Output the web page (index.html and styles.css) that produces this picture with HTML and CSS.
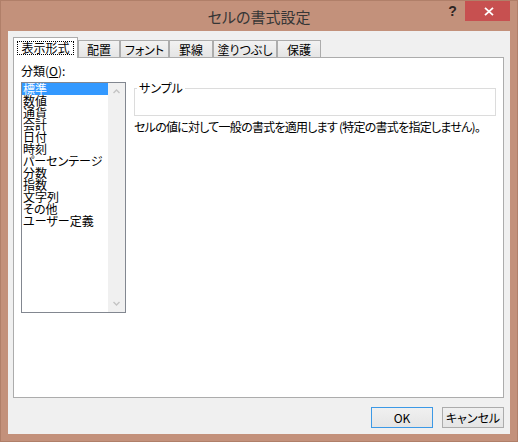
FILE: index.html
```html
<!DOCTYPE html>
<html lang="ja">
<head>
<meta charset="utf-8">
<title>セルの書式設定</title>
<link rel="stylesheet" href="styles.css">
</head>
<body>
<div class="window">
  <div class="titlebar">
    <div class="spacer"></div>
    <div class="title">セルの書式設定</div>
    <div class="controls">
      <span class="help">?</span>
      <span class="close"><svg width="10" height="9" viewBox="0 0 10 9"><path d="M1 0.8 L9 8.2 M9 0.8 L1 8.2" stroke="#fff" stroke-width="1.8" fill="none"/></svg></span>
    </div>
  </div>
  <div class="client">
    <div class="tabs">
      <div class="tab selected w65"><span class="focus">表示形式</span></div>
      <div class="tab w42">配置</div>
      <div class="tab w49">フォント</div>
      <div class="tab w44">罫線</div>
      <div class="tab w64">塗りつぶし</div>
      <div class="tab w44">保護</div>
    </div>
    <div class="panel">
      <div class="left">
        <div class="label">分類(<u>O</u>):</div>
        <div class="listbox">
          <ul class="items">
            <li class="item selected">標準</li>
            <li class="item">数値</li>
            <li class="item">通貨</li>
            <li class="item">会計</li>
            <li class="item">日付</li>
            <li class="item">時刻</li>
            <li class="item">パーセンテージ</li>
            <li class="item">分数</li>
            <li class="item">指数</li>
            <li class="item">文字列</li>
            <li class="item">その他</li>
            <li class="item">ユーザー定義</li>
          </ul>
          <div class="scrollbar">
            <span class="arrow"><svg width="7" height="5" viewBox="0 0 7 5"><path d="M0.5 4 L3.5 1 L6.5 4" stroke="#c4c4c4" stroke-width="1.4" fill="none"/></svg></span>
            <span class="arrow"><svg width="7" height="5" viewBox="0 0 7 5"><path d="M0.5 1 L3.5 4 L6.5 1" stroke="#c4c4c4" stroke-width="1.4" fill="none"/></svg></span>
          </div>
        </div>
      </div>
      <div class="right">
        <fieldset class="sample"><legend>サンプル</legend></fieldset>
        <p class="desc">セルの値に対して一般の書式を適用します (特定の書式を指定しません)。</p>
      </div>
    </div>
    <div class="buttons">
      <button class="btn default">OK</button>
      <button class="btn">キャンセル</button>
    </div>
  </div>
</div>
</body>
</html>
```
FILE: styles.css
```css
* { box-sizing: border-box; }
html, body { margin: 0; padding: 0; }
body {
  font-family: "Noto Sans CJK JP", "Noto Sans", sans-serif;
  font-size: 12px;
  font-feature-settings: "palt";
  color: #000;
  background: #c3917b;
}
.window {
  width: 518px;
  height: 442px;
  background: #c3917b;
  border: 1px solid #b07f69;
  display: flex;
  flex-direction: column;
}
.titlebar {
  height: 30px;
  display: grid;
  grid-template-columns: 1fr auto 1fr;
  align-items: center;
}
.title {
  font-size: 15px;
  color: #363636;
  line-height: 20px;
  padding-top: 1px;
}
.controls {
  justify-self: end;
  align-self: start;
  display: flex;
  margin-right: 7px;
}
.help {
  width: 26px;
  height: 20px;
  font-family: "Liberation Sans", sans-serif;
  font-weight: bold;
  font-size: 14px;
  line-height: 20px;
  text-align: center;
  color: #2e2523;
  padding-left: 1px;
}
.close {
  width: 45px;
  height: 20px;
  background: #c75050;
  display: flex;
  align-items: center;
  justify-content: center;
  padding-left: 2px;
}
.client {
  flex: 1;
  margin: 0 7px 7px 7px;
  background: #f0f0f0;
  padding: 6px 6px 0 5px;
  display: flex;
  flex-direction: column;
}
.tabs {
  height: 20px;
  display: flex;
  align-items: flex-end;
  position: relative;
  z-index: 1;
}
.tab {
  height: 17px;
  border: 1px solid #acacac;
  border-bottom: none;
  background: linear-gradient(#f2f2f2, #e5e5e5);
  display: flex;
  align-items: center;
  justify-content: center;
  line-height: 12px;
  white-space: nowrap;
  padding-top: 1px;
}
.tab.selected {
  height: 21px;
  margin-bottom: -1px;
  background: #fff;
  padding-top: 0;
  padding-bottom: 1px;
}
.focus {
  display: inline-block;
  border: 1px dotted #000;
  height: 14px;
  line-height: 12px;
  padding: 0 3px;
}
.w65 { width: 65px; }
.w42 { width: 42px; }
.w49 { width: 49px; }
.w44 { width: 44px; }
.w64 { width: 64px; }
.panel {
  height: 341px;
  width: 491px;
  background: #fff;
  border: 1px solid #acacac;
  display: flex;
  padding: 7px 0 0 7px;
}
.left {
  width: 105px;
  display: flex;
  flex-direction: column;
}
.label {
  height: 12px;
  line-height: 12px;
  margin-bottom: 5px;
}
.label u { text-decoration-thickness: 1px; }
.listbox {
  width: 105px;
  height: 231px;
  border: 1px solid #828790;
  background: #fff;
  display: flex;
}
.items {
  list-style: none;
  margin: 0;
  padding: 0;
  flex: 1;
}
.item {
  height: 12px;
  line-height: 12px;
  padding-left: 1px;
  white-space: nowrap;
}
.item.selected {
  background: #3399ff;
  color: #fff;
}
.scrollbar {
  width: 17px;
  background: #f0f0f0;
  display: flex;
  flex-direction: column;
  justify-content: space-between;
}
.arrow {
  height: 17px;
  display: flex;
  align-items: center;
  justify-content: center;
}
.right {
  width: 362px;
  margin-left: 8px;
  margin-top: 16px;
}
.sample {
  margin: 0;
  padding: 0;
  min-inline-size: 0;
  height: 35px;
  border: 1px solid #dcdcdc;
}
.sample legend {
  font-size: 12px;
  line-height: 14px;
  padding: 0 2px;
  margin-left: 2px;
}
.desc {
  margin: 5px 0 0 0;
  line-height: 12px;
  white-space: nowrap;
  letter-spacing: -0.75px;
}
.buttons {
  margin-top: 9px;
  display: flex;
  justify-content: flex-end;
  gap: 9px;
}
.btn {
  width: 62px;
  height: 21px;
  border: 1px solid #acacac;
  background: linear-gradient(#f0f0f0, #e5e5e5);
  font-family: "Noto Sans CJK JP", "Noto Sans", sans-serif;
  font-feature-settings: "palt";
  font-size: 12px;
  line-height: 12px;
  color: #000;
  padding: 0;
  margin: 0;
}
.btn.default {
  border-color: #3c99e6;
}
```
